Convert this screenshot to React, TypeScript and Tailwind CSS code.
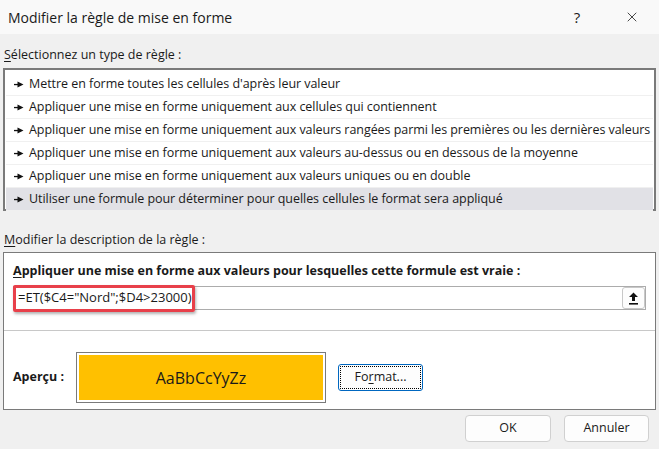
import { X } from "lucide-react";

const rules = [
  "Mettre en forme toutes les cellules d'après leur valeur",
  "Appliquer une mise en forme uniquement aux cellules qui contiennent",
  "Appliquer une mise en forme uniquement aux valeurs rangées parmi les premières ou les dernières valeurs",
  "Appliquer une mise en forme uniquement aux valeurs au-dessus ou en dessous de la moyenne",
  "Appliquer une mise en forme uniquement aux valeurs uniques ou en double",
  "Utiliser une formule pour déterminer pour quelles cellules le format sera appliqué",
];

function Pointer() {
  return (
    <svg width="10" height="7" viewBox="0 0 10 7" className="shrink-0">
      <rect x="0" y="2.9" width="5" height="1.3" fill="#111" />
      <path d="M3.5 0.5 L9.5 3.5 L3.5 6.5 Z" fill="#111" />
    </svg>
  );
}

export default function App() {
  const selected = 5;

  return (
    <div
      className="w-[659px] h-[449px] bg-[#f0f0f0] text-[12.5px] text-[#1a1a1a] flex flex-col overflow-hidden"
      style={{ fontFamily: '"Open Sans", "Noto Sans", sans-serif' }}
    >
      {/* Title bar */}
      <div className="h-[34px] bg-[#f9f9f9] flex items-center pl-2 pr-0 shrink-0">
        <span className="text-[14px] flex-1 text-[#1a1a1a]">Modifier la règle de mise en forme</span>
        <span className="text-[15px] w-[14px] mr-[40px] text-center">?</span>
        <X className="w-[16px] h-[16px] mr-[19px]" strokeWidth={1.2} />
      </div>

      {/* Rule type */}
      <div className="pl-[4px] mt-[12px] leading-[18px]">
        <span className="underline underline-offset-2">S</span>électionnez un type de règle :
      </div>
      <div className="mx-[3px] mt-[4px] h-[143px] border-2 border-[#7a7a7a] bg-white px-[1px] pt-[3px]">
        {rules.map((r, i) => (
          <div
            key={r}
            className={
              "h-[23px] flex items-center gap-[5px] pl-[8px] whitespace-nowrap tracking-[-0.05px] border-b border-[#f0f0f0] " +
              (i === selected ? "bg-[#e1e1e6]" : "")
            }
          >
            <Pointer />
            <span>{r}</span>
          </div>
        ))}
      </div>

      {/* Description */}
      <div className="pl-[4px] mt-[20px] leading-[18px]">
        <span className="underline underline-offset-2">M</span>odifier la description de la règle :
      </div>
      <div className="mx-[3px] mt-[3px] h-[158px] border border-[#7a7a7a] bg-white flex flex-col">
        <div className="pl-[9px] pt-[9px] font-bold leading-[18px]">
          <span className="underline underline-offset-2">A</span>ppliquer une mise en forme aux valeurs pour lesquelles cette formule est vraie :
        </div>
        <div className="mx-[9px] mt-[6px] h-[24px] border border-[#acacac] flex items-center relative">
          <div className="absolute left-[-1px] top-[-2px] w-[182px] h-[27px] border-[3px] border-[#e8404a] rounded-[2px] shadow-[1px_2px_3px_rgba(0,0,0,0.3)]" />
          <span className="pl-[4px] flex-1 whitespace-nowrap text-[13px]">=ET($C4="Nord";$D4&gt;23000)</span>
          <div className="w-[23px] h-[22px] border border-[#c8c8c8] rounded-[3px] bg-[#fdfdfd] flex items-center justify-center">
            <svg width="11" height="13" viewBox="0 0 11 13">
              <path d="M5.5 0.5 L10 5 L7 5 L7 9 L4 9 L4 5 L1 5 Z" fill="#111" />
              <rect x="1" y="11" width="9" height="1.6" fill="#111" />
            </svg>
          </div>
        </div>
        <div className="mt-[20px] border-t border-[#c8c8c8]" />
        <div className="flex items-center mt-[21px]">
          <span className="pl-[9px] w-[72px] font-bold">Aperçu :</span>
          <div className="w-[250px] h-[51px] border border-[#7a7a7a] p-[2px]">
            <div className="w-full h-full bg-[#ffc000] flex items-center justify-center text-[16px] text-[#1a1a1a]">
              AaBbCcYyZz
            </div>
          </div>
          <div className="ml-[12px] w-[85px] h-[27px] border border-[#0067c0] rounded-[3px] p-[1px] bg-[#fdfdfd]">
            <div className="w-full h-full border border-dotted border-black rounded-[1px] flex items-center justify-center">
              Fo<span className="underline underline-offset-2">r</span>mat...
            </div>
          </div>
        </div>
      </div>

      {/* Buttons */}
      <div className="flex justify-end gap-[13px] pr-[10px] mt-[5px]">
        <div className="w-[86px] h-[27px] border border-[#d0d0d0] rounded-[4px] bg-[#fdfdfd] flex items-center justify-center">
          OK
        </div>
        <div className="w-[85px] h-[27px] border border-[#d0d0d0] rounded-[4px] bg-[#fdfdfd] flex items-center justify-center">
          Annuler
        </div>
      </div>
    </div>
  );
}
